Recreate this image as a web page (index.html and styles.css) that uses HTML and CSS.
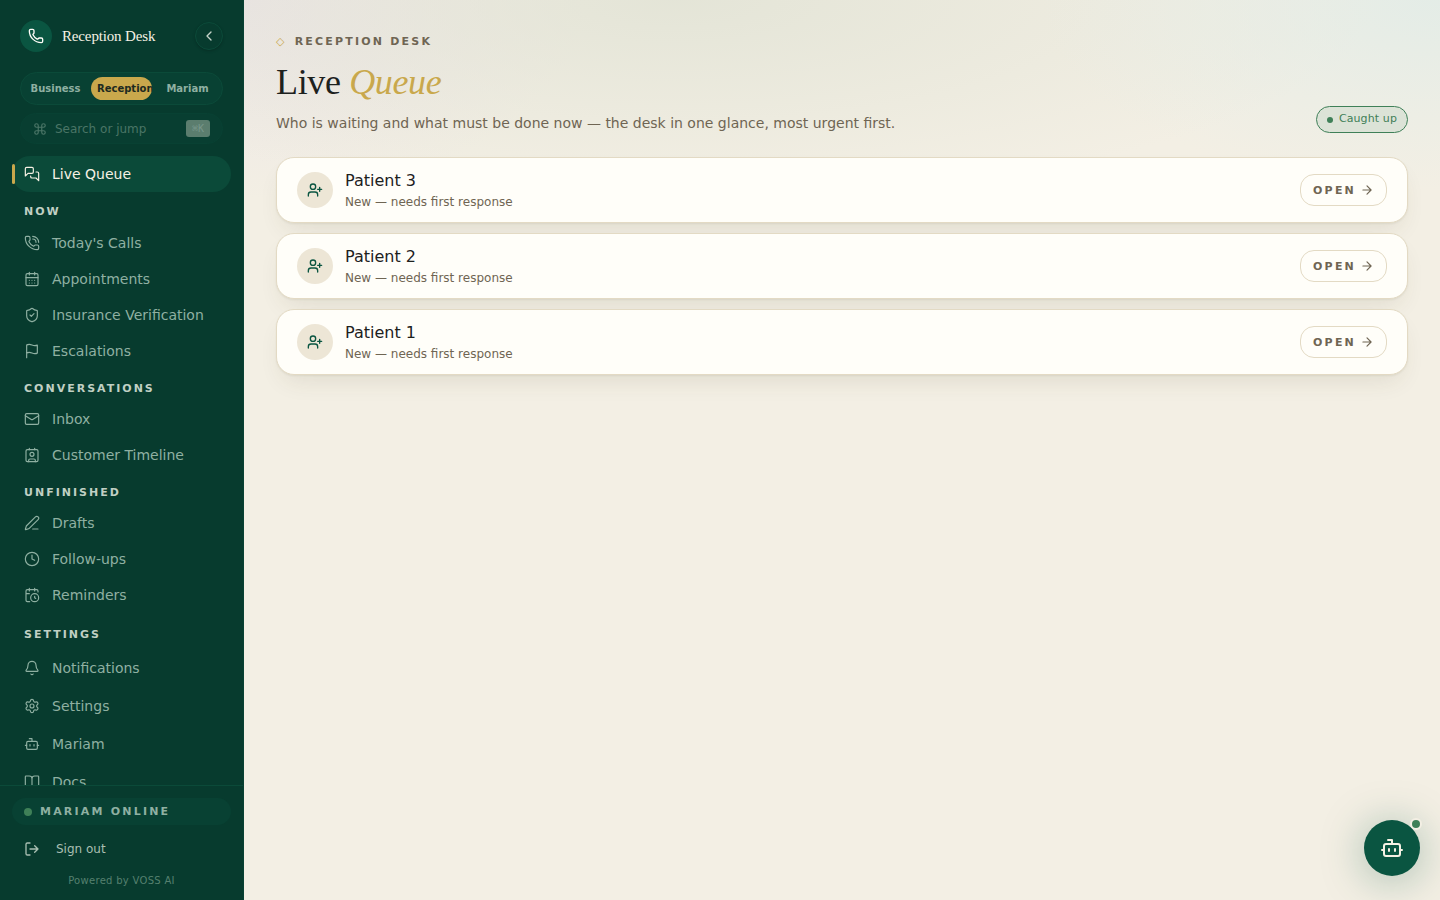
FILE: index.html
```html
<!DOCTYPE html>
<html lang="en">
<head>
    <meta charset="UTF-8">
    <meta name="viewport" content="width=device-width, initial-scale=1.0">
    <title>Live Queue - Reception Desk</title>
    <link rel="stylesheet" href="styles.css">
</head>
<body>
    <!-- Shared icons -->
    <svg class="sprite" aria-hidden="true">
        <symbol id="user-add" viewBox="0 0 24 24">
            <path d="M16 21v-2a4 4 0 0 0-4-4H6a4 4 0 0 0-4 4v2"/>
            <circle cx="9" cy="7" r="4"/>
            <path d="M19 8v6M22 11h-6"/>
        </symbol>
        <symbol id="arrow-right" viewBox="0 0 24 24">
            <path d="M5 12h14M12 5l7 7-7 7"/>
        </symbol>
        <symbol id="bot" viewBox="0 0 24 24">
            <path d="M12 8V4H8"/>
            <rect width="16" height="12" x="4" y="8" rx="2"/>
            <path d="M2 14h2M20 14h2M15 13v2M9 13v2"/>
        </symbol>
    </svg>

    <div class="app">
        <aside class="sidebar">
            <div class="sidebar-top">
                <div class="brand">
                    <span class="brand-logo">
                        <svg class="icon" viewBox="0 0 24 24"><path d="M13.832 16.568a1 1 0 0 0 1.213-.303l.355-.465A2 2 0 0 1 17 15h3a2 2 0 0 1 2 2v3a2 2 0 0 1-2 2A18 18 0 0 1 2 4a2 2 0 0 1 2-2h3a2 2 0 0 1 2 2v3a2 2 0 0 1-.8 1.6l-.468.351a1 1 0 0 0-.292 1.233 14 14 0 0 0 6.392 6.384"/></svg>
                    </span>
                    <span class="brand-name">Reception Desk</span>
                    <button class="collapse" type="button" aria-label="Collapse sidebar">
                        <svg class="icon" viewBox="0 0 24 24"><path d="m15 18-6-6 6-6"/></svg>
                    </button>
                </div>
                <div class="tabs">
                    <button class="tab" type="button">Business</button>
                    <button class="tab active" type="button">Reception</button>
                    <button class="tab" type="button">Mariam</button>
                </div>
                <button class="search" type="button">
                    <svg class="icon" viewBox="0 0 24 24"><path d="M15 6v12a3 3 0 1 0 3-3H6a3 3 0 1 0 3 3V6a3 3 0 1 0-3 3h12a3 3 0 1 0-3-3"/></svg>
                    <span>Search or jump</span>
                    <kbd>⌘K</kbd>
                </button>
            </div>

            <nav class="nav">
                <a class="nav-item active" href="#queue">
                    <svg class="icon" viewBox="0 0 24 24"><path d="M14 9a2 2 0 0 1-2 2H6l-4 4V4a2 2 0 0 1 2-2h8a2 2 0 0 1 2 2z"/><path d="M18 9h2a2 2 0 0 1 2 2v11l-4-4h-6a2 2 0 0 1-2-2v-1"/></svg>
                    Live Queue
                </a>

                <h2 class="nav-label">Now</h2>
                <a class="nav-item" href="#calls">
                    <svg class="icon" viewBox="0 0 24 24"><path d="M13 2a9 9 0 0 1 9 9M13 6a5 5 0 0 1 5 5"/><path d="M13.832 16.568a1 1 0 0 0 1.213-.303l.355-.465A2 2 0 0 1 17 15h3a2 2 0 0 1 2 2v3a2 2 0 0 1-2 2A18 18 0 0 1 2 4a2 2 0 0 1 2-2h3a2 2 0 0 1 2 2v3a2 2 0 0 1-.8 1.6l-.468.351a1 1 0 0 0-.292 1.233 14 14 0 0 0 6.392 6.384"/></svg>
                    Today's Calls
                </a>
                <a class="nav-item" href="#appointments">
                    <svg class="icon" viewBox="0 0 24 24"><path d="M8 2v4M16 2v4"/><rect width="18" height="18" x="3" y="4" rx="2"/><path d="M3 10h18M8 14h.01M12 14h.01M16 14h.01M8 18h.01M12 18h.01M16 18h.01"/></svg>
                    Appointments
                </a>
                <a class="nav-item" href="#insurance">
                    <svg class="icon" viewBox="0 0 24 24"><path d="M20 13c0 5-3.5 7.5-7.66 8.95a1 1 0 0 1-.67-.01C7.5 20.5 4 18 4 13V6a1 1 0 0 1 1-1c2 0 4.5-1.2 6.24-2.72a1.17 1.17 0 0 1 1.52 0C14.51 3.81 17 5 19 5a1 1 0 0 1 1 1z"/><path d="m9 12 2 2 4-4"/></svg>
                    Insurance Verification
                </a>
                <a class="nav-item" href="#escalations">
                    <svg class="icon" viewBox="0 0 24 24"><path d="M4 15s1-1 4-1 5 2 8 2 4-1 4-1V3s-1 1-4 1-5-2-8-2-4 1-4 1zM4 22v-7"/></svg>
                    Escalations
                </a>

                <h2 class="nav-label">Conversations</h2>
                <a class="nav-item" href="#inbox">
                    <svg class="icon" viewBox="0 0 24 24"><rect width="20" height="16" x="2" y="4" rx="2"/><path d="m22 7-8.97 5.7a1.94 1.94 0 0 1-2.06 0L2 7"/></svg>
                    Inbox
                </a>
                <a class="nav-item" href="#timeline">
                    <svg class="icon" viewBox="0 0 24 24"><path d="M16 2v2M8 2v2M7 22v-2a2 2 0 0 1 2-2h6a2 2 0 0 1 2 2v2"/><circle cx="12" cy="11" r="3"/><rect x="3" y="4" width="18" height="18" rx="2"/></svg>
                    Customer Timeline
                </a>

                <h2 class="nav-label">Unfinished</h2>
                <a class="nav-item" href="#drafts">
                    <svg class="icon" viewBox="0 0 24 24"><path d="M13 21h8"/><path d="M21.174 6.812a1 1 0 0 0-3.986-3.987L3.842 16.174a2 2 0 0 0-.5.83l-1.321 4.352a.5.5 0 0 0 .623.622l4.353-1.32a2 2 0 0 0 .83-.497z"/></svg>
                    Drafts
                </a>
                <a class="nav-item" href="#followups">
                    <svg class="icon" viewBox="0 0 24 24"><circle cx="12" cy="12" r="10"/><path d="M12 6v6l4 2"/></svg>
                    Follow-ups
                </a>
                <a class="nav-item" href="#reminders">
                    <svg class="icon" viewBox="0 0 24 24"><path d="M16 14v2.2l1.6 1M16 2v4M21 7.5V6a2 2 0 0 0-2-2H5a2 2 0 0 0-2 2v14a2 2 0 0 0 2 2h3.5M3 10h5M8 2v4"/><circle cx="16" cy="16" r="6"/></svg>
                    Reminders
                </a>

                <div class="nav-settings">
                    <h2 class="nav-label">Settings</h2>
                    <a class="nav-item" href="#notifications">
                        <svg class="icon" viewBox="0 0 24 24"><path d="M10.268 21a2 2 0 0 0 3.464 0"/><path d="M3.262 15.326A1 1 0 0 0 4 17h16a1 1 0 0 0 .74-1.673C19.41 13.956 18 12.499 18 8A6 6 0 0 0 6 8c0 4.499-1.411 5.956-2.738 7.326"/></svg>
                        Notifications
                    </a>
                    <a class="nav-item" href="#settings">
                        <svg class="icon" viewBox="0 0 24 24"><path d="M9.671 4.136a2.34 2.34 0 0 1 4.659 0 2.34 2.34 0 0 0 3.319 1.915 2.34 2.34 0 0 1 2.33 4.033 2.34 2.34 0 0 0 0 3.831 2.34 2.34 0 0 1-2.33 4.033 2.34 2.34 0 0 0-3.319 1.915 2.34 2.34 0 0 1-4.659 0 2.34 2.34 0 0 0-3.32-1.915 2.34 2.34 0 0 1-2.33-4.033 2.34 2.34 0 0 0 0-3.831A2.34 2.34 0 0 1 6.35 6.051a2.34 2.34 0 0 0 3.319-1.915"/><circle cx="12" cy="12" r="3"/></svg>
                        Settings
                    </a>
                    <a class="nav-item" href="#mariam">
                        <svg class="icon"><use href="#bot"/></svg>
                        Mariam
                    </a>
                    <a class="nav-item" href="#docs">
                        <svg class="icon" viewBox="0 0 24 24"><path d="M12 7v14M3 18a1 1 0 0 1-1-1V4a1 1 0 0 1 1-1h5a4 4 0 0 1 4 4 4 4 0 0 1 4-4h5a1 1 0 0 1 1 1v13a1 1 0 0 1-1 1h-6a3 3 0 0 0-3 3 3 3 0 0 0-3-3z"/></svg>
                        Docs
                    </a>
                </div>
            </nav>

            <div class="sidebar-footer">
                <div class="online"><span class="dot"></span>Mariam online</div>
                <button class="sign-out" type="button">
                    <svg class="icon" viewBox="0 0 24 24"><path d="m16 17 5-5-5-5M21 12H9M9 21H5a2 2 0 0 1-2-2V5a2 2 0 0 1 2-2h4"/></svg>
                    Sign out
                </button>
                <p class="powered">Powered by VOSS AI</p>
            </div>
        </aside>

        <main class="main">
            <header class="page-header">
                <div>
                    <p class="eyebrow"><span class="diamond">◇</span>Reception Desk</p>
                    <h1>Live <em>Queue</em></h1>
                    <p class="subtitle">Who is waiting and what must be done now — the desk in one glance, most urgent first.</p>
                </div>
                <span class="status"><span class="status-dot"></span>Caught up</span>
            </header>

            <ul class="queue">
                <li class="card">
                    <span class="avatar"><svg class="icon"><use href="#user-add"/></svg></span>
                    <div class="card-text">
                        <h3>Patient 3</h3>
                        <p>New — needs first response</p>
                    </div>
                    <button class="open" type="button">Open <svg class="icon"><use href="#arrow-right"/></svg></button>
                </li>
                <li class="card">
                    <span class="avatar"><svg class="icon"><use href="#user-add"/></svg></span>
                    <div class="card-text">
                        <h3>Patient 2</h3>
                        <p>New — needs first response</p>
                    </div>
                    <button class="open" type="button">Open <svg class="icon"><use href="#arrow-right"/></svg></button>
                </li>
                <li class="card">
                    <span class="avatar"><svg class="icon"><use href="#user-add"/></svg></span>
                    <div class="card-text">
                        <h3>Patient 1</h3>
                        <p>New — needs first response</p>
                    </div>
                    <button class="open" type="button">Open <svg class="icon"><use href="#arrow-right"/></svg></button>
                </li>
            </ul>
        </main>
    </div>

    <button class="assistant" type="button" aria-label="Open assistant">
        <svg class="icon"><use href="#bot"/></svg>
        <span class="assistant-dot"></span>
    </button>
</body>
</html>
```
FILE: styles.css
```css
:root {
    --green-900: #073b2e;
    --green-800: #084133;
    --green-700: #0b4a39;
    --green-600: #0a5541;
    --gold: #c9a84c;
    --cream: #f3efe4;
    --card: #fffef9;
    --line: #e3dac4;
    --text: #1d211e;
    --muted: #6f6553;
    --ok: #3f8058;
}
* {
    box-sizing: border-box;
}
body {
    margin: 0;
    font-family: "DejaVu Sans", sans-serif;
    font-size: 14px;
    color: var(--text);
    background: var(--cream);
}
h1, h2, h3, p, ul {
    margin: 0;
    padding: 0;
}
button {
    font-family: inherit;
    cursor: pointer;
}
.sprite {
    display: none;
}
.icon {
    width: 16px;
    height: 16px;
    flex: none;
    fill: none;
    stroke: currentColor;
    stroke-width: 2;
    stroke-linecap: round;
    stroke-linejoin: round;
}
.app {
    display: flex;
    height: 100vh;
}

/* Sidebar */
.sidebar {
    width: 244px;
    flex: none;
    display: flex;
    flex-direction: column;
    background: var(--green-900);
    border-right: 1px solid var(--green-800);
    color: #8fb0a2;
}
.sidebar-top {
    padding: 20px 20px 12px;
}
.brand {
    display: flex;
    align-items: center;
    gap: 10px;
    margin-bottom: 20px;
}
.brand-logo {
    width: 32px;
    height: 32px;
    display: grid;
    place-items: center;
    border-radius: 50%;
    background: var(--green-600);
    color: #fffef9;
}
.brand-name {
    flex: 1;
    font-family: "Liberation Serif", serif;
    font-size: 15px;
    letter-spacing: -0.01em;
    color: #f6f1e4;
}
.collapse {
    width: 28px;
    height: 28px;
    display: grid;
    place-items: center;
    padding: 0;
    border: 1px solid var(--green-700);
    border-radius: 50%;
    background: var(--green-900);
    box-shadow: 0 1px 3px rgba(0, 0, 0, 0.2);
    color: #c5d3c9;
}
.tabs {
    display: grid;
    grid-template-columns: repeat(3, 1fr);
    gap: 5px;
    padding: 4px;
    border: 1px solid var(--green-700);
    border-radius: 17px;
    background: var(--green-800);
}
.tab {
    min-width: 0;
    height: 23px;
    padding: 0 5px;
    border: 0;
    border-radius: 12px;
    background: none;
    color: #8fb0a2;
    font-size: 10px;
    font-weight: bold;
    overflow: hidden;
}
.tab.active {
    padding: 0 6px;
    background: var(--gold);
    color: #1d2a20;
}
.search {
    width: 100%;
    height: 31px;
    display: flex;
    align-items: center;
    gap: 8px;
    margin-top: 8px;
    padding: 0 12px;
    border: 1px solid var(--green-800);
    border-radius: 16px;
    background: #083e31;
    color: #4a7566;
    font-size: 12px;
}
.search .icon {
    width: 14px;
    height: 14px;
}
.search kbd {
    margin-left: auto;
    padding: 0 6px;
    border-radius: 3px;
    background: #5b7d6e;
    color: #78968a;
    font-family: "DejaVu Sans Mono", monospace;
    font-size: 10px;
    line-height: 17px;
}
.nav {
    flex: 1;
    min-height: 0;
    overflow: hidden;
    padding: 0 12px;
}
.nav-item {
    height: 36px;
    display: flex;
    align-items: center;
    gap: 12px;
    padding: 0 12px;
    border-radius: 18px;
    color: #8fb0a2;
    text-decoration: none;
}
.nav-item .icon {
    stroke-width: 1.75;
}
.nav-item.active {
    position: relative;
    background: var(--green-700);
    color: #f6f1e4;
}
.nav-item.active::before {
    content: "";
    position: absolute;
    left: 0;
    top: 8px;
    width: 3px;
    height: 20px;
    border-radius: 2px;
    background: var(--gold);
}
.nav-label {
    padding: 13px 12px 5px;
    font-size: 11px;
    line-height: 14px;
    letter-spacing: 2px;
    text-transform: uppercase;
    color: #c0d0c4;
}
.nav-item.active + .nav-label,
.nav-settings .nav-label {
    padding-bottom: 6px;
}
.nav-settings {
    display: grid;
    gap: 2px;
    padding-top: 2px;
}
.sidebar-footer {
    padding: 12px 12px 11px;
    border-top: 1px solid var(--green-700);
}
.online {
    display: flex;
    align-items: center;
    gap: 8px;
    height: 27px;
    padding: 0 12px;
    border-radius: 14px;
    background: var(--green-800);
    font-size: 11px;
    font-weight: bold;
    letter-spacing: 0.2em;
    text-transform: uppercase;
}
.dot {
    width: 8px;
    height: 8px;
    border-radius: 50%;
    background: var(--ok);
}
.sign-out {
    width: 100%;
    height: 32px;
    display: flex;
    align-items: center;
    gap: 16px;
    margin-top: 8px;
    padding: 0 12px;
    border: 0;
    background: none;
    color: #a9bfb2;
    font-size: 12px;
}
.powered {
    margin-top: 8px;
    font-size: 10px;
    line-height: 16px;
    letter-spacing: 0.03em;
    text-align: center;
    color: #55806f;
}

/* Main */
.main {
    flex: 1;
    min-width: 0;
    overflow: auto;
    padding: 32px;
    background:
        radial-gradient(ellipse 400px 190px at 100% 0, rgba(226, 236, 231, 0.9), transparent),
        radial-gradient(ellipse 700px 200px at 36% 0, rgba(224, 226, 212, 0.8), transparent),
        radial-gradient(ellipse 340px 200px at 0 0, rgba(234, 226, 230, 0.8), transparent),
        var(--cream);
}
.page-header {
    display: flex;
    align-items: flex-end;
    justify-content: space-between;
    gap: 24px;
    margin-bottom: 24px;
}
.eyebrow {
    display: flex;
    gap: 8px;
    font-size: 11px;
    font-weight: bold;
    line-height: 20px;
    letter-spacing: 0.2em;
    text-transform: uppercase;
    color: var(--muted);
}
.diamond {
    font-weight: normal;
    color: var(--gold);
}
h1 {
    margin-top: 10px;
    font-family: "Liberation Serif", serif;
    font-size: 36px;
    font-weight: normal;
    line-height: 40px;
    letter-spacing: -0.01em;
}
h1 em {
    color: var(--gold);
}
.subtitle {
    margin-top: 12px;
    line-height: 19px;
    color: var(--muted);
}
.status {
    display: flex;
    align-items: center;
    gap: 6px;
    padding: 4px 10px 6px;
    border: 1px solid var(--ok);
    border-radius: 14px;
    background: #dce3d7;
    color: var(--ok);
    font-size: 11px;
    line-height: 15px;
    letter-spacing: 0.01em;
    white-space: nowrap;
}
.status-dot {
    width: 6px;
    height: 6px;
    margin-top: 3px;
    border-radius: 50%;
    background: var(--ok);
}
.queue {
    display: grid;
    gap: 10px;
    list-style: none;
}
.card {
    display: flex;
    align-items: center;
    gap: 12px;
    padding: 11px 20px;
    border: 1px solid var(--line);
    border-radius: 18px;
    background: var(--card);
    box-shadow: 0 1px 2px rgba(70, 65, 30, 0.07), 0 12px 24px -8px rgba(70, 65, 30, 0.12);
}
.avatar {
    width: 36px;
    height: 36px;
    display: grid;
    place-items: center;
    border-radius: 50%;
    background: #ede6d6;
    color: var(--green-600);
}
.card-text {
    flex: 1;
}
.card-text h3 {
    font-size: 16px;
    font-weight: normal;
    line-height: 24px;
}
.card-text p {
    font-size: 12px;
    line-height: 18px;
    color: var(--muted);
}
.open {
    height: 32px;
    display: flex;
    align-items: center;
    gap: 4px;
    padding: 0 12px;
    border: 1px solid var(--line);
    border-radius: 14px;
    background: none;
    color: var(--muted);
    font-size: 11px;
    font-weight: bold;
    letter-spacing: 0.2em;
    text-transform: uppercase;
}
.open .icon {
    width: 14px;
    height: 14px;
}

/* Floating assistant button */
.assistant {
    position: fixed;
    right: 20px;
    bottom: 24px;
    width: 56px;
    height: 56px;
    display: grid;
    place-items: center;
    padding: 0;
    border: 0;
    border-radius: 50%;
    background: var(--green-600);
    box-shadow: 0 4px 44px rgba(10, 85, 65, 0.35);
    color: #f6f1e4;
}
.assistant .icon {
    width: 24px;
    height: 24px;
}
.assistant-dot {
    position: absolute;
    top: -2px;
    right: -2px;
    width: 12px;
    height: 12px;
    border: 2px solid var(--cream);
    border-radius: 50%;
    background: var(--ok);
}
```
